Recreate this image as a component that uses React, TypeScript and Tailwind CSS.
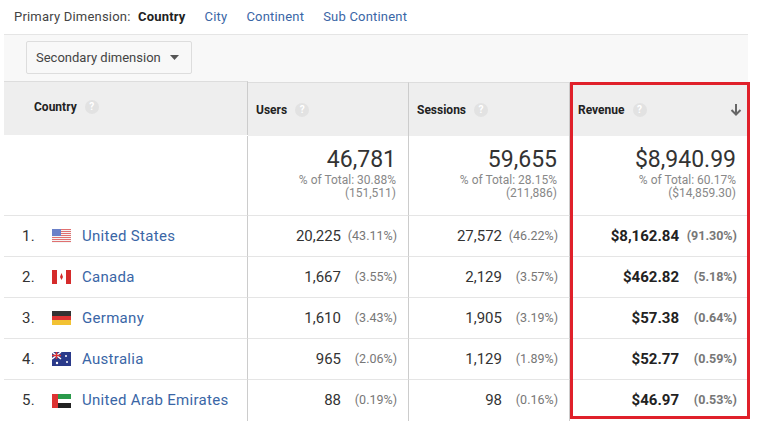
const rows = [
  { n: 1, c: "United States", f: "us", u: "20,225", up: "(43.11%)", s: "27,572", sp: "(46.22%)", r: "$8,162.84", rp: "(91.30%)" },
  { n: 2, c: "Canada", f: "ca", u: "1,667", up: "(3.55%)", s: "2,129", sp: "(3.57%)", r: "$462.82", rp: "(5.18%)" },
  { n: 3, c: "Germany", f: "de", u: "1,610", up: "(3.43%)", s: "1,905", sp: "(3.19%)", r: "$57.38", rp: "(0.64%)" },
  { n: 4, c: "Australia", f: "au", u: "965", up: "(2.06%)", s: "1,129", sp: "(1.89%)", r: "$52.77", rp: "(0.59%)" },
  { n: 5, c: "United Arab Emirates", f: "ae", u: "88", up: "(0.19%)", s: "98", sp: "(0.16%)", r: "$46.97", rp: "(0.53%)" },
];

function Flag({ f }: { f: string }) {
  return (
    <svg width="19" height="14" viewBox="0 0 19 14">
      {f === "us" && (<>
        {[0,1,2,3,4,5,6].map(i => <rect key={i} x="0" y={i*2} width="19" height="1" fill="#e07070" />)}
        {[0,1,2,3,4,5,6].map(i => <rect key={"w"+i} x="0" y={i*2+1} width="19" height="1" fill="#f4f4f4" />)}
        <rect x="0" y="0" width="9" height="7" fill="#6a80c8" />
      </>)}
      {f === "ca" && (<>
        <rect width="19" height="14" fill="#fff" />
        <rect width="5" height="14" fill="#d52b2b" />
        <rect x="14" width="5" height="14" fill="#d52b2b" />
        <path d="M9.5 3 L11 7 L9.5 10 L8 7 Z" fill="#d52b2b" />
      </>)}
      {f === "de" && (<>
        <rect width="19" height="5" fill="#333" />
        <rect y="5" width="19" height="4" fill="#d33" />
        <rect y="9" width="19" height="5" fill="#f2c233" />
      </>)}
      {f === "au" && (<>
        <rect width="19" height="14" fill="#2a3a8a" />
        <path d="M0 0 L9 7 M9 0 L0 7" stroke="#fff" strokeWidth="1.5" />
        <path d="M4.5 0 V7 M0 3.5 H9" stroke="#d33" strokeWidth="1.5" />
        <circle cx="14" cy="4" r="1" fill="#fff" /><circle cx="15" cy="10" r="1" fill="#fff" /><circle cx="5" cy="11" r="1.2" fill="#fff" />
      </>)}
      {f === "ae" && (<>
        <rect width="19" height="5" fill="#2a9a4a" />
        <rect y="5" width="19" height="4" fill="#fff" />
        <rect y="9" width="19" height="5" fill="#222" />
        <rect width="6" height="14" fill="#d33" />
      </>)}
    </svg>
  );
}

function Q() {
  return <span className="inline-flex w-[14px] h-[14px] rounded-full bg-[#e2e2e2] text-white text-[10px] font-bold items-center justify-center ml-2">?</span>;
}

export default function App() {
  return (
    <div className="w-[757px] h-[422px] bg-white overflow-hidden text-[#333]" style={{ fontFamily: "Roboto, 'Liberation Sans', sans-serif" }}>
      <div className="flex items-center gap-[19px] h-[34px] pl-[14px] text-[13px] tracking-[0.2px]">
        <span className="text-[#444]">Primary Dimension: <b className="ml-1 text-[#222]">Country</b></span>
        <span className="text-[#3a66a6]">City</span>
        <span className="text-[#3a66a6]">Continent</span>
        <span className="text-[#3a66a6]">Sub Continent</span>
      </div>
      <div className="mx-[4px] w-[744px] bg-[#f8f8f8] border-t border-[#e5e5e5] pt-[6px] pb-[8px] pl-[22px]">
        <div className="w-[166px] h-[33px] border border-[#ddd] rounded-[2px] bg-[#f8f8f8] flex items-center pl-[9px] text-[13px] text-[#444]">
          Secondary dimension
          <svg width="9" height="5" className="ml-[9px]"><path d="M0 0 H9 L4.5 5 Z" fill="#555" /></svg>
        </div>
      </div>
      <div className="mx-[4px] w-[744px] grid grid-cols-[244px_161px_161px_178px] relative">
        <div className="h-[54px] bg-[#eee] border-t border-[#ddd] border-r border-r-[#ccc] flex items-center pl-[30px] text-[12px] font-bold text-[#222] -mt-[1px]"><span className="-mt-[4px] flex items-center">Country<Q /></span></div>
        <div className="h-[54px] bg-[#eee] border-t border-[#ddd] border-r border-r-[#ccc] flex items-center pl-[8px] text-[12px] font-bold text-[#222]">Users<Q /></div>
        <div className="h-[54px] bg-[#eee] border-t border-[#ddd] border-r border-r-[#ccc] flex items-center pl-[8px] text-[12px] font-bold text-[#222]">Sessions<Q /></div>
        <div className="h-[54px] bg-[#eee] border-t border-[#ddd] flex items-center pl-[8px] pr-[6px] text-[12px] font-bold text-[#222]">Revenue<Q />
          <svg width="12" height="13" viewBox="0 0 12 13" className="ml-auto"><path d="M6 1 V11 M1.5 7 L6 11.5 L10.5 7" stroke="#666" strokeWidth="2" fill="none" /></svg>
        </div>

        <div className="h-[80px] border-r border-[#ccc] border-b border-b-[#e5e5e5]"></div>
        {[["46,781","30.88%","(151,511)"],["59,655","28.15%","(211,886)"],["$8,940.99","60.17%","($14,859.30)"]].map((t,i)=>(
          <div key={i} className={`h-[80px] ${i<2?"border-r border-[#ccc]":""} border-b border-b-[#e5e5e5] flex flex-col items-end pr-[12px] pt-[12px] leading-none`}>
            <div className="text-[23px] text-[#333]">{t[0]}</div>
            <div className="text-[12px] text-[#888] mt-[3px]">% of Total: {t[1]}</div>
            <div className="text-[12px] text-[#888] mt-[1px]">{t[2]}</div>
          </div>
        ))}

        {rows.map((r, i) => (
          <div key={r.n} className="contents">
            <div className={`h-[41px] border-r border-[#ccc] ${i<4?"border-b border-b-[#e5e5e5]":""} flex items-center text-[15px] tracking-[0.3px]`}>
              <span className="w-[48px] pl-[18px] text-[#333]">{r.n}.</span>
              <Flag f={r.f} />
              <span className="ml-[11px] text-[#3a66a6]">{r.c}</span>
            </div>
            <div className={`h-[41px] border-r border-[#ccc] ${i<4?"border-b border-b-[#e5e5e5]":""} flex items-center justify-end pr-[11px] text-[15px]`}>
              {r.u}<span className="text-[12.5px] text-[#777] w-[56px] text-right">{r.up}</span>
            </div>
            <div className={`h-[41px] border-r border-[#ccc] ${i<4?"border-b border-b-[#e5e5e5]":""} flex items-center justify-end pr-[11px] text-[15px]`}>
              {r.s}<span className="text-[12.5px] text-[#777] w-[56px] text-right">{r.sp}</span>
            </div>
            <div className={`h-[41px] ${i<4?"border-b border-b-[#e5e5e5]":""} flex items-center justify-end pr-[11px] text-[15px]`}>
              <b className="text-[#222]">{r.r}</b><span className="text-[12.5px] font-bold text-[#777] w-[58px] text-right">{r.rp}</span>
            </div>
          </div>
        ))}
        <div className="absolute left-[566px] top-0 w-[180px] h-[337px] border-[3px] border-[#e0202a] pointer-events-none"></div>
      </div>
    </div>
  );
}
